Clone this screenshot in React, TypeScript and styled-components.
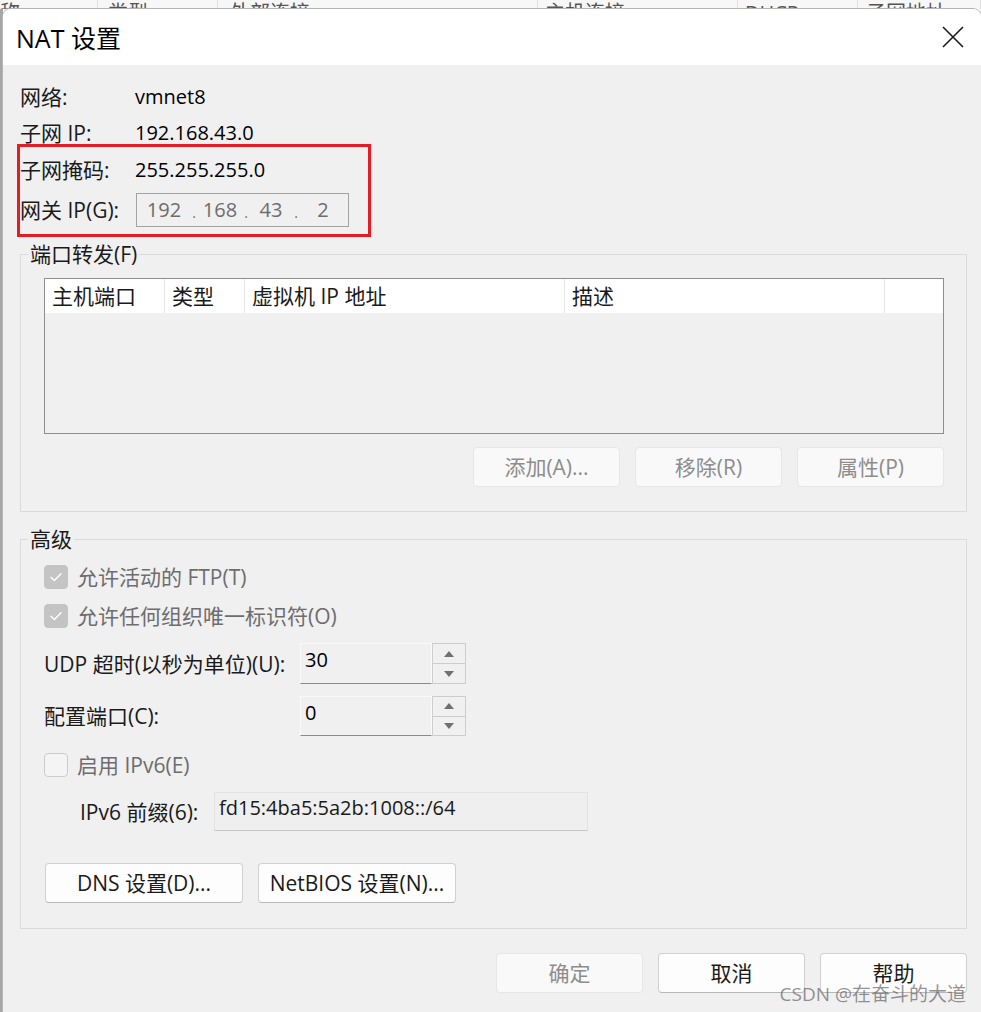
import styled, { createGlobalStyle } from "styled-components";

const GlobalStyle = createGlobalStyle`
  *, *::before, *::after {
    box-sizing: border-box;
  }
  html, body {
    margin: 0;
    padding: 0;
  }
  body {
    width: 981px;
    height: 1012px;
    overflow: hidden;
    background: #f6f6f6;
    font-family: "Open Sans", "Noto Sans CJK SC", sans-serif;
    color: #000;
  }
`;

const PageS = styled.div`
  width: 981px;
  height: 1012px;
  display: flex;
  flex-direction: column;
  overflow: hidden;
`;

/* the window behind the dialog, only its header strip shows */
const BackHeaderS = styled.div`
  height: 9px;
  flex: none;
  display: flex;
  overflow: hidden;
  background: #f7f7f7;
`;

const BackCellS = styled.div<{ $w: number; $pad: number }>`
  width: ${(p) => p.$w}px;
  flex: none;
  padding-left: ${(p) => p.$pad}px;
  border-right: 1px solid #e0e0e0;
  font-size: 20px;
  line-height: 26px;
  color: #555;
  white-space: nowrap;
`;

const DeskRowS = styled.div`
  flex: 1;
  display: flex;
`;

const LeftEdgeS = styled.div`
  width: 3px;
  flex: none;
  background: #a6a6a6;
`;

const DialogS = styled.div`
  position: relative;
  flex: 1;
  display: flex;
  flex-direction: column;
  background: #f0f0f0;
  border-radius: 8px 8px 0 0;
  box-shadow: 0 0 0 1px #b4b4b4;
  overflow: hidden;
`;

const TitleBarS = styled.div`
  height: 56px;
  flex: none;
  display: flex;
  align-items: center;
  justify-content: space-between;
  padding: 0 17px 0 13px;
  background: #fff;
`;

const TitleS = styled.div`
  font-size: 25px;
  line-height: 30px;
  margin-top: 1px;
`;

const BodyS = styled.div`
  display: flex;
  flex-direction: column;
  padding: 14px 14px 0 17px;
`;

const InfoGridS = styled.div`
  display: grid;
  grid-template-columns: 115px auto;
  grid-template-rows: 36px 36px 37px 44px;
  align-items: center;
  font-size: 20px;
  line-height: 24px;
`;

const InfoLabelS = styled.div`
  font-size: 21px;
  color: #1a1a1a;
  white-space: nowrap;
`;

const IpBoxS = styled.div`
  width: 213px;
  height: 34px;
  margin-left: 1px;
  display: flex;
  align-items: center;
  border: 1px solid #a3a3a3;
  background: #f0f0f0;
  color: #6d6d6d;
`;

const OctetS = styled.span<{ $w: number }>`
  width: ${(p) => p.$w}px;
  text-align: center;
`;

const DotS = styled.span`
  width: 6px;
  text-align: center;
  font-size: 14px;
  margin-top: 6px;
`;

const GroupS = styled.fieldset<{ $top: number; $bottom: number }>`
  min-width: 0;
  margin: ${(p) => p.$top}px 0 0;
  padding: 12px 22px ${(p) => p.$bottom}px 23px;
  border: 1px solid #dadada;
`;

const LegendS = styled.legend`
  margin-left: -16px;
  padding: 0 2px;
  font-size: 21px;
  line-height: 24px;
  color: #1a1a1a;
`;

const TableS = styled.div`
  height: 156px;
  border: 1px solid #8e8e8e;
  background: #f0f0f0;
`;

const TableHeadS = styled.div`
  display: grid;
  grid-template-columns: 120px 80px 320px 320px 1fr;
  height: 34px;
  background: #fff;
`;

const HeadCellS = styled.div`
  padding-left: 7px;
  border-right: 1px solid #e6e6e6;
  font-size: 21px;
  line-height: 34px;
  color: #1a1a1a;
  white-space: nowrap;

  &:last-child {
    border-right: 0;
  }
`;

const ButtonRowS = styled.div<{ $top: number; $justify?: string }>`
  display: flex;
  justify-content: ${(p) => p.$justify ?? "flex-start"};
  gap: 15px;
  margin-top: ${(p) => p.$top}px;
`;

const ButtonS = styled.button<{ $w: number; $off?: boolean }>`
  width: ${(p) => p.$w}px;
  height: 40px;
  padding: 0;
  border-radius: 4px;
  font-family: inherit;
  font-size: 21px;
  font-weight: 400;
  line-height: 24px;
  background: ${(p) => (p.$off ? "#f9f9f9" : "#fdfdfd")};
  color: ${(p) => (p.$off ? "#8d8d8d" : "#1a1a1a")};
  border: 1px solid ${(p) => (p.$off ? "#e6e6e6" : "#d0d0d0")};
  border-bottom-color: ${(p) => (p.$off ? "#e6e6e6" : "#b8b8b8")};
`;

const AdvRowS = styled.div<{ $top: number; $h: number }>`
  display: flex;
  align-items: center;
  height: ${(p) => p.$h}px;
  margin-top: ${(p) => p.$top}px;
  font-size: 21px;
  line-height: 24px;
`;

const CheckBoxS = styled.span<{ $on: boolean }>`
  width: 24px;
  height: 24px;
  flex: none;
  display: flex;
  align-items: center;
  justify-content: center;
  border-radius: 4px;
  background: ${(p) => (p.$on ? "#c4c4c4" : "#f4f4f4")};
  border: 1px solid ${(p) => (p.$on ? "#c4c4c4" : "#cbcbcb")};
`;

const CheckLabelS = styled.span`
  margin-left: 9px;
  color: #6d6d6d;
  white-space: nowrap;
`;

const FieldLabelS = styled.span<{ $w: number; $indent?: number }>`
  width: ${(p) => p.$w}px;
  flex: none;
  padding-left: ${(p) => p.$indent ?? 0}px;
  color: #1a1a1a;
  white-space: nowrap;
`;

const SpinS = styled.div`
  display: flex;
  height: 100%;
`;

const SpinFieldS = styled.div`
  width: 132px;
  padding: 4px 0 0 4px;
  font-size: 20px;
  background: #f0f0f0;
  border: 1px solid #f9f9f9;
  border-bottom-color: #8a8a8a;
`;

const SpinBtnsS = styled.div`
  width: 34px;
  display: flex;
  flex-direction: column;
`;

const SpinBtnS = styled.div`
  flex: 1;
  display: flex;
  align-items: center;
  justify-content: center;
  border: 1px solid #cdcdcd;
  background: #f0f0f0;

  & + & {
    border-top: 0;
  }
`;

const PrefixBoxS = styled.div`
  width: 374px;
  height: 100%;
  padding: 3px 0 0 4px;
  font-size: 20px;
  background: #efefef;
  border: 1px solid #e3e3e3;
  border-bottom-color: #c6c6c6;
  color: #1a1a1a;
`;

const HighlightS = styled.div`
  position: absolute;
  left: 14px;
  top: 135px;
  width: 354px;
  height: 93px;
  border: 3px solid #e51c23;
  pointer-events: none;
`;

const WatermarkS = styled.div`
  position: absolute;
  right: 15px;
  top: 973px;
  font-size: 19px;
  line-height: 24px;
  color: rgba(105, 105, 105, 0.72);
  white-space: nowrap;
`;

const CloseIcon = () => (
  <svg width="22" height="22" viewBox="0 0 22 22">
    <path d="M1 1 L21 21 M21 1 L1 21" stroke="#1a1a1a" strokeWidth="1.6" />
  </svg>
);

const Check = () => (
  <svg width="14" height="10" viewBox="0 0 14 10">
    <path
      d="M2 5.2 L5.4 8.4 L12 1.8"
      fill="none"
      stroke="#fff"
      strokeWidth="1.4"
      strokeLinecap="round"
      strokeLinejoin="round"
    />
  </svg>
);

const Arrow = ({ up }: { up: boolean }) => (
  <svg width="10" height="6" viewBox="0 0 10 6">
    <path d={up ? "M0 6 L5 0 L10 6 Z" : "M0 0 L10 0 L5 6 Z"} fill="#707070" />
  </svg>
);

const Spinner = ({ value }: { value: string }) => (
  <SpinS>
    <SpinFieldS>{value}</SpinFieldS>
    <SpinBtnsS>
      <SpinBtnS>
        <Arrow up />
      </SpinBtnS>
      <SpinBtnS>
        <Arrow up={false} />
      </SpinBtnS>
    </SpinBtnsS>
  </SpinS>
);

const backColumns = [
  { w: 98, pad: 0, text: "称" },
  { w: 120, pad: 10, text: "类型" },
  { w: 320, pad: 12, text: "外部连接" },
  { w: 200, pad: 7, text: "主机连接" },
  { w: 120, pad: 7, text: "DHCP" },
  { w: 123, pad: 8, text: "子网地址" },
];

const tableColumns = ["主机端口", "类型", "虚拟机 IP 地址", "描述", ""];

export default function App() {
  return (
    <PageS>
      <GlobalStyle />
      <BackHeaderS>
        {backColumns.map((c) => (
          <BackCellS key={c.text} $w={c.w} $pad={c.pad}>
            {c.text}
          </BackCellS>
        ))}
      </BackHeaderS>

      <DeskRowS>
        <LeftEdgeS />
        <DialogS>
          <TitleBarS>
            <TitleS>NAT 设置</TitleS>
            <CloseIcon />
          </TitleBarS>

          <BodyS>
            <InfoGridS>
              <InfoLabelS>网络:</InfoLabelS>
              <div>vmnet8</div>
              <InfoLabelS>子网 IP:</InfoLabelS>
              <div>192.168.43.0</div>
              <InfoLabelS>子网掩码:</InfoLabelS>
              <div>255.255.255.0</div>
              <InfoLabelS>网关 IP(G):</InfoLabelS>
              <IpBoxS>
                <OctetS $w={54}>192</OctetS>
                <DotS>.</DotS>
                <OctetS $w={46}>168</OctetS>
                <DotS>.</DotS>
                <OctetS $w={44}>43</OctetS>
                <DotS>.</DotS>
                <OctetS $w={48}>2</OctetS>
              </IpBoxS>
            </InfoGridS>

            <GroupS $top={10} $bottom={24}>
              <LegendS>端口转发(F)</LegendS>
              <TableS>
                <TableHeadS>
                  {tableColumns.map((c, i) => (
                    <HeadCellS key={i}>{c}</HeadCellS>
                  ))}
                </TableHeadS>
              </TableS>
              <ButtonRowS $top={13} $justify="flex-end">
                <ButtonS $w={147} $off>
                  添加(A)...
                </ButtonS>
                <ButtonS $w={147} $off>
                  移除(R)
                </ButtonS>
                <ButtonS $w={147} $off>
                  属性(P)
                </ButtonS>
              </ButtonRowS>
            </GroupS>

            <GroupS $top={15} $bottom={25}>
              <LegendS>高级</LegendS>
              <AdvRowS $top={1} $h={26}>
                <CheckBoxS $on>
                  <Check />
                </CheckBoxS>
                <CheckLabelS>允许活动的 FTP(T)</CheckLabelS>
              </AdvRowS>
              <AdvRowS $top={13} $h={26}>
                <CheckBoxS $on>
                  <Check />
                </CheckBoxS>
                <CheckLabelS>允许任何组织唯一标识符(O)</CheckLabelS>
              </AdvRowS>
              <AdvRowS $top={14} $h={41}>
                <FieldLabelS $w={256}>UDP 超时(以秒为单位)(U):</FieldLabelS>
                <Spinner value="30" />
              </AdvRowS>
              <AdvRowS $top={12} $h={40}>
                <FieldLabelS $w={256}>配置端口(C):</FieldLabelS>
                <Spinner value="0" />
              </AdvRowS>
              <AdvRowS $top={16} $h={26}>
                <CheckBoxS $on={false} />
                <CheckLabelS>启用 IPv6(E)</CheckLabelS>
              </AdvRowS>
              <AdvRowS $top={14} $h={39}>
                <FieldLabelS $w={170} $indent={36}>
                  IPv6 前缀(6):
                </FieldLabelS>
                <PrefixBoxS>fd15:4ba5:5a2b:1008::/64</PrefixBoxS>
              </AdvRowS>
              <ButtonRowS $top={32}>
                <ButtonS $w={198} style={{ marginLeft: 1 }}>
                  DNS 设置(D)...
                </ButtonS>
                <ButtonS $w={198}>NetBIOS 设置(N)...</ButtonS>
              </ButtonRowS>
            </GroupS>

            <ButtonRowS $top={24} $justify="flex-end">
              <ButtonS $w={147} $off>
                确定
              </ButtonS>
              <ButtonS $w={147}>取消</ButtonS>
              <ButtonS $w={147}>帮助</ButtonS>
            </ButtonRowS>
          </BodyS>

          <HighlightS />
          <WatermarkS>CSDN @在奋斗的大道</WatermarkS>
        </DialogS>
      </DeskRowS>
    </PageS>
  );
}
